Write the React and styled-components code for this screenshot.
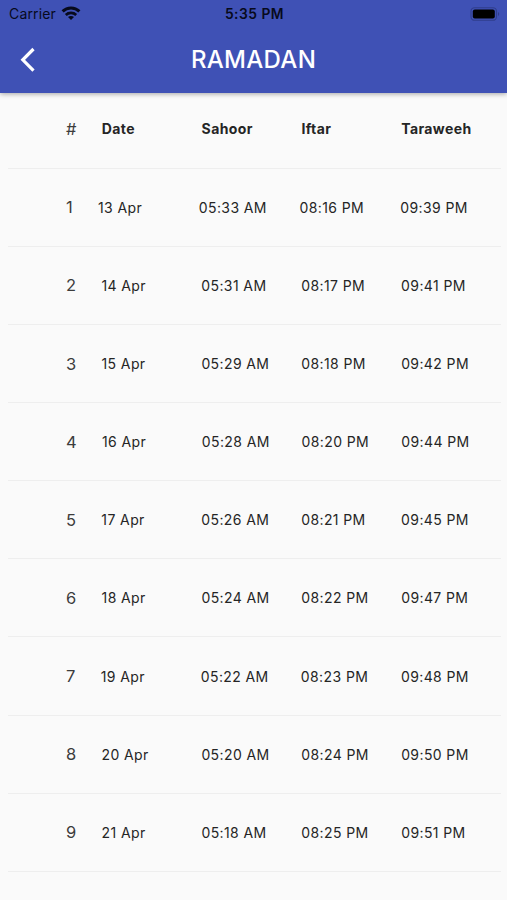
import React from 'react'
import styled, { createGlobalStyle } from 'styled-components'

const GlobalStyle = createGlobalStyle`
  * {
    box-sizing: border-box;
  }
  body {
    margin: 0;
    background-color: #fafafa;
    font-family: Inter, Roboto, sans-serif;
  }
`

const Screen = styled.div`
  height: 900px;
  display: flex;
  flex-direction: column;
  overflow: hidden;
  background-color: #fafafa;
`

const TopArea = styled.header`
  height: 93.4px;
  flex-shrink: 0;
  background-color: #3f51b5;
  box-shadow: 0 1px 5px rgba(0, 0, 0, 0.35);
`

const StatusBar = styled.div`
  height: 27px;
  padding: 0 7px 0 9px;
  display: grid;
  grid-template-columns: 1fr auto 1fr;
  align-items: center;
  color: #070a1c;
`

const Carrier = styled.div`
  display: flex;
  align-items: center;
  gap: 5px;
  font-size: 14px;
  letter-spacing: 0.15px;
`

const Clock = styled.div`
  font-size: 13.8px;
  font-weight: 600;
  letter-spacing: 0.5px;
`

const BatteryIcon = styled.svg`
  justify-self: end;
`

const NavBar = styled.div`
  height: 65px;
  padding: 0 20px;
  display: grid;
  grid-template-columns: 40px 1fr 40px;
  align-items: center;
`

const BackButton = styled.button`
  display: flex;
  padding: 0;
  border: none;
  background: none;
`

const Title = styled.h1`
  margin: 0;
  color: #fff;
  font-size: 24px;
  font-weight: 500;
  line-height: 30px;
  letter-spacing: 0.3px;
  text-align: center;
`

const Table = styled.main`
  padding: 0 6px 0 8px;
`

const Row = styled.div`
  height: ${props => (props.$header ? '75.3px' : '78.13px')};
  padding: ${props => (props.$header ? '0 0 4px 58px' : '0 0 0 58px')};
  display: flex;
  align-items: center;
  border-bottom: 1px solid #eeeeee;
`

const Index = styled.span`
  margin-right: 25.3px;
  color: #3c3c3c;
  font-size: 16.5px;
`

const Cell = styled.span`
  flex: 1 1 0;
  min-width: 0;
  color: #252525;
  font-size: 14px;
  font-weight: ${props => (props.$bold ? 700 : 400)};
  letter-spacing: 0.4px;
  white-space: nowrap;
`

const columns = ['Date', 'Sahoor', 'Iftar', 'Taraweeh']

const days = [
  ['13 Apr', '05:33 AM', '08:16 PM', '09:39 PM'],
  ['14 Apr', '05:31 AM', '08:17 PM', '09:41 PM'],
  ['15 Apr', '05:29 AM', '08:18 PM', '09:42 PM'],
  ['16 Apr', '05:28 AM', '08:20 PM', '09:44 PM'],
  ['17 Apr', '05:26 AM', '08:21 PM', '09:45 PM'],
  ['18 Apr', '05:24 AM', '08:22 PM', '09:47 PM'],
  ['19 Apr', '05:22 AM', '08:23 PM', '09:48 PM'],
  ['20 Apr', '05:20 AM', '08:24 PM', '09:50 PM'],
  ['21 Apr', '05:18 AM', '08:25 PM', '09:51 PM'],
]

function Wifi() {
  return (
    <svg width="20" height="15" viewBox="0 0 20 15" fill="none" stroke="#070a1c" strokeWidth="3">
      <path d="M1.6 5.4C6.3 0.8 13.7 0.8 18.4 5.4" />
      <path d="M4.8 9C7.7 6.2 12.3 6.2 15.2 9" strokeWidth="2.7" />
      <path d="M10 14L7 11.1C8.6 9.7 11.4 9.7 13 11.1Z" fill="#070a1c" stroke="none" />
    </svg>
  )
}

function Battery() {
  return (
    <BatteryIcon width="30" height="14" viewBox="0 0 30 14">
      <rect x="1" y="0.7" width="25.5" height="12.6" rx="3.6" fill="none" stroke="#303e8c" strokeWidth="1.1" />
      <rect x="2.8" y="2.4" width="22" height="9" rx="2" fill="#000" />
      <path d="M28 5C29.6 5.6 29.6 8.4 28 9Z" fill="#303e8c" />
    </BatteryIcon>
  )
}

function App() {
  return (
    <Screen>
      <GlobalStyle />
      <TopArea>
        <StatusBar>
          <Carrier>
            Carrier
            <Wifi />
          </Carrier>
          <Clock>5:35 PM</Clock>
          <Battery />
        </StatusBar>
        <NavBar>
          <BackButton aria-label="Back">
            <svg width="16" height="26" viewBox="0 0 16 26" fill="none" stroke="#fff" strokeWidth="3.2">
              <path d="M13.5 2L2.8 12.8L13.5 23.6" />
            </svg>
          </BackButton>
          <Title>RAMADAN</Title>
        </NavBar>
      </TopArea>
      <Table>
        <Row $header>
          <Index>#</Index>
          {columns.map(name => (
            <Cell key={name} $bold>{name}</Cell>
          ))}
        </Row>
        {days.map((day, i) => (
          <Row key={day[0]}>
            <Index>{i + 1}</Index>
            {day.map(value => (
              <Cell key={value}>{value}</Cell>
            ))}
          </Row>
        ))}
      </Table>
    </Screen>
  )
}

export default App
